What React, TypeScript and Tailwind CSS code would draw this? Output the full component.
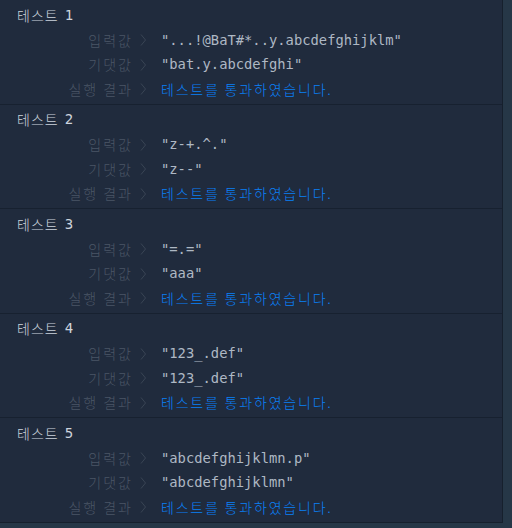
const tests = [
  { input: '"...!@BaT#*..y.abcdefghijklm"', expected: '"bat.y.abcdefghi"' },
  { input: '"z-+.^."', expected: '"z--"' },
  { input: '"=.="', expected: '"aaa"' },
  { input: '"123_.def"', expected: '"123_.def"' },
  { input: '"abcdefghijklmn.p"', expected: '"abcdefghijklmn"' },
];

const kr = 'font-["Noto_Sans_CJK_KR","Noto_Sans",sans-serif] font-light';
const mono = 'font-["DejaVu_Sans_Mono",monospace]';

function Chevron() {
  return (
    <svg width="8" height="12" viewBox="0 0 8 12" className="shrink-0">
      <path d="M2 0.5 L6.5 6 L2 11.5" fill="none" stroke="#3a4555" strokeWidth="1" />
    </svg>
  );
}

function Row({ label, children }: { label: string; children: React.ReactNode }) {
  return (
    <div className="flex items-center h-[24.5px]">
      <span className={`w-[133px] text-right text-[14px] tracking-[2px] text-[#4b5666] ${kr}`}>{label}</span>
      <span className="w-[28px] flex items-center pl-[6px]">
        <Chevron />
      </span>
      {children}
    </div>
  );
}

export default function App() {
  return (
    <div className="w-[512px] h-[528px] bg-[#263747] overflow-hidden">
      <div className="w-[503px] h-[523px] bg-[#202b3d] border-r border-b border-[#16202d]">
        {tests.map((t, i) => (
          <div key={i} className={`h-[104.5px] pt-[5px] ${i < tests.length - 1 ? 'border-b border-[#172130]' : ''}`}>
            <div className="h-[20px] flex items-center pl-[17px] text-[14px] text-[#cdd4dd]">
              <span className={`${kr} tracking-[1px]`}>테스트</span>
              <span className={`${mono} ml-[6px] text-[14px]`}>{i + 1}</span>
            </div>
            <div className="mt-[3px]">
              <Row label="입력값">
                <span className={`${mono} text-[13.8px] text-[#aeb8c4]`}>{t.input}</span>
              </Row>
              <Row label="기댓값">
                <span className={`${mono} text-[13.8px] text-[#aeb8c4]`}>{t.expected}</span>
              </Row>
              <Row label="실행 결과">
                <span className={`${kr} text-[14px] tracking-[1.8px] text-[#0a80f8]`}>테스트를 통과하였습니다.</span>
              </Row>
            </div>
          </div>
        ))}
      </div>
    </div>
  );
}
